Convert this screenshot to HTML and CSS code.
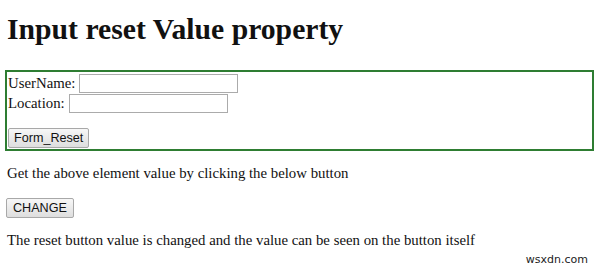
FILE: index.html
```html
<!DOCTYPE html>
<html lang="en">
<head>
    <meta charset="UTF-8">
    <meta name="viewport" content="width=device-width, initial-scale=1.0">
    <title>Input reset Value property</title>
    <link rel="stylesheet" href="styles.css">
</head>
<body>

    <h1>Input reset Value property</h1>
    <form class="box" id="form1">
        <div class="row">UserName: <input type="text" class="field field-user"></div>
        <div class="row">Location: <input type="text" class="field field-loc"></div>
        <div class="row row-btn"><input type="reset" id="RESET1" class="btn btn-reset" value="Form_Reset"></div>
    </form>
    <p class="info info-top">Get the above element value by clicking the below button</p>
    <button class="btn btn-change" onclick="changeValue()">CHANGE</button>
    <p class="info" id="Sample">The reset button value is changed and the value can be seen on the button itself</p>

    <span class="mark">wsxdn.com</span>

    <script>
        function changeValue() {
            document.getElementById('RESET1').value = 'RESET_FORM';
        }
    </script>

</body>
</html>
```

FILE: styles.css
```css
body {
    font-family: "Liberation Serif", "Times New Roman", serif;
    font-size: 14.8px;
    color: #111;
    background: #fff;
    margin: 0;
    padding: 0 6px 0 5px;
}
h1 {
    font-size: 29.7px;
    font-weight: bold;
    margin: 13px 0 24px 2px;
    line-height: 33px;
}
.box {
    border: 2px solid #2e7d32;
    padding: 1px 2px 1px 1px;
    margin: 0;
}
.row {
    display: flex;
    align-items: center;
    gap: 4px;
    height: 20px;
}
.row-btn {
    margin-top: 15px;
}
.field {
    width: 155px;
    height: 17px;
    padding: 0 1px;
    border: 1px solid #ababab;
    margin: 0;
    font-size: 13px;
}
.btn {
    font-family: "Liberation Sans", Arial, sans-serif;
    font-size: 12.6px;
    color: #111;
    background: linear-gradient(#f7f7f7, #dedede);
    border: 1px solid #a8a8a8;
    border-radius: 2px;
    padding: 0 5px;
    height: 20px;
    margin: 0;
}
.btn-reset {
    margin-left: 0;
}
.btn-change {
    margin-left: 1px;
    padding: 0 6px;
}
.info {
    margin: 14px 0 14px 2px;
    line-height: 17px;
}
.info-top {
    margin-bottom: 16px;
}
.mark {
    position: absolute;
    right: 12px;
    bottom: 4px;
    font-family: "DejaVu Sans", sans-serif;
    font-size: 11px;
    color: #222;
}
```
